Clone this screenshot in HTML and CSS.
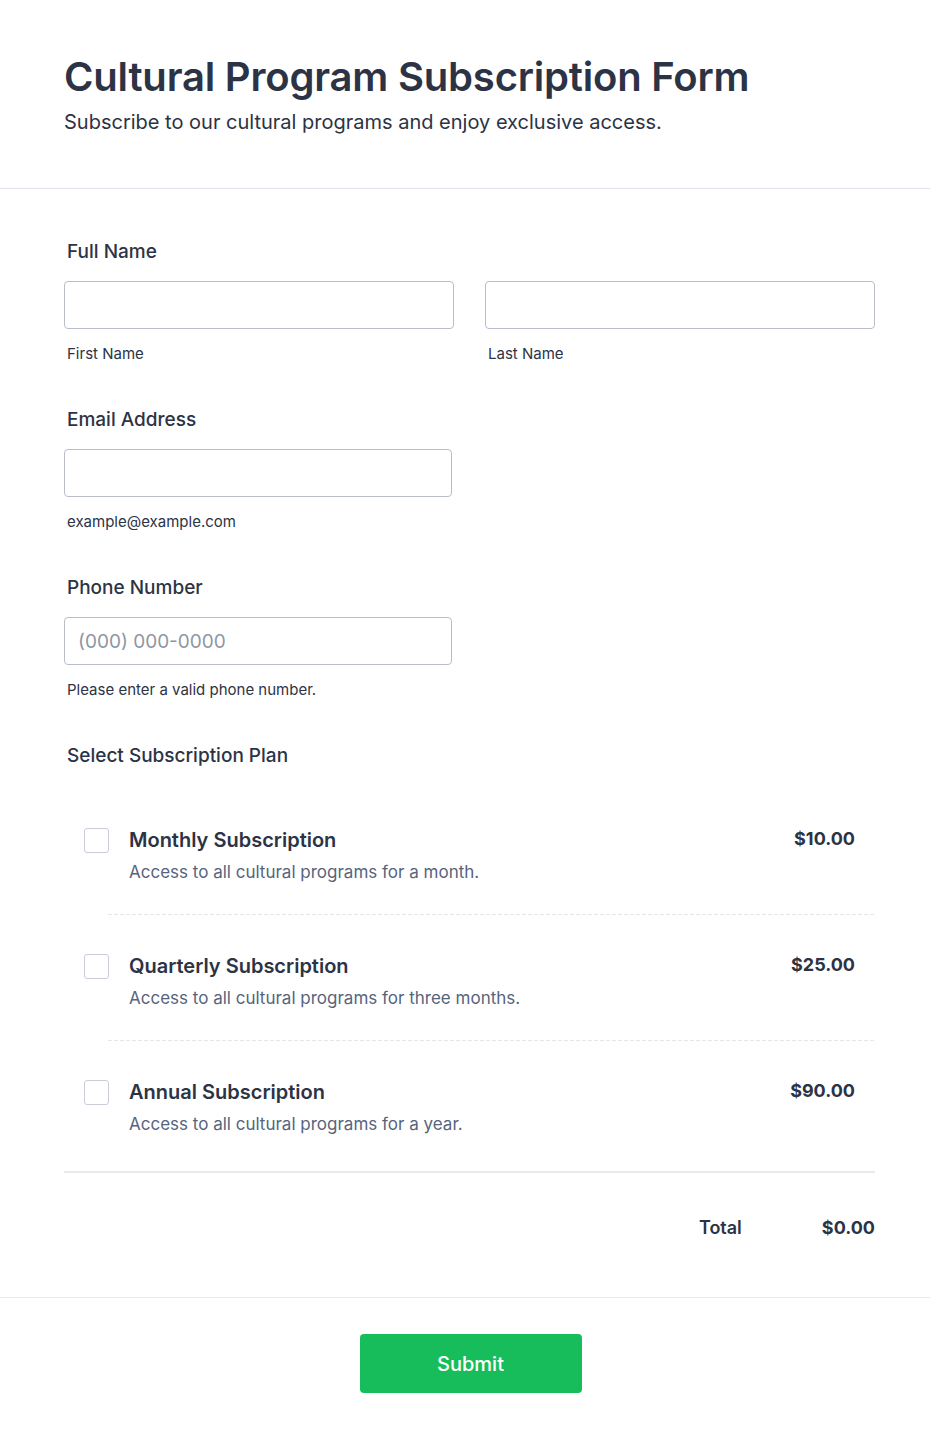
FILE: index.html
```html
<!DOCTYPE html>
<html lang="en">
<head>
<meta charset="utf-8">
<title>Cultural Program Subscription Form</title>
<link rel="stylesheet" href="styles.css">
</head>
<body>
<div class="page">
  <header class="header">
    <h1 class="title">Cultural Program Subscription Form</h1>
    <p class="subtitle">Subscribe to our cultural programs and enjoy exclusive access.</p>
  </header>
  <main class="form">
    <section class="field">
      <div class="label">Full Name</div>
      <div class="name-row">
        <div class="sub">
          <input class="input" type="text">
          <div class="sublabel">First Name</div>
        </div>
        <div class="sub">
          <input class="input" type="text">
          <div class="sublabel">Last Name</div>
        </div>
      </div>
    </section>
    <section class="field">
      <div class="label">Email Address</div>
      <div class="half">
        <input class="input" type="text">
        <div class="sublabel">example@example.com</div>
      </div>
    </section>
    <section class="field">
      <div class="label">Phone Number</div>
      <div class="half">
        <input class="input" type="text" placeholder="(000) 000-0000">
        <div class="sublabel">Please enter a valid phone number.</div>
      </div>
    </section>
    <section class="field plans">
      <div class="label">Select Subscription Plan</div>
      <div class="plan-list">
        <div class="plan">
          <span class="check"></span>
          <div class="plan-body">
            <div class="plan-name">Monthly Subscription</div>
            <div class="plan-desc">Access to all cultural programs for a month.</div>
          </div>
          <div class="plan-price">$10.00</div>
        </div>
        <div class="plan">
          <span class="check"></span>
          <div class="plan-body">
            <div class="plan-name">Quarterly Subscription</div>
            <div class="plan-desc">Access to all cultural programs for three months.</div>
          </div>
          <div class="plan-price">$25.00</div>
        </div>
        <div class="plan last">
          <span class="check"></span>
          <div class="plan-body">
            <div class="plan-name">Annual Subscription</div>
            <div class="plan-desc">Access to all cultural programs for a year.</div>
          </div>
          <div class="plan-price">$90.00</div>
        </div>
      </div>
      <div class="total">
        <span class="total-label">Total</span>
        <span class="total-value">$0.00</span>
      </div>
    </section>
  </main>
  <footer class="footer">
    <button class="submit" type="button">Submit</button>
  </footer>
</div>
</body>
</html>
```
FILE: styles.css
```css
* { box-sizing: border-box; }
html, body { margin: 0; padding: 0; background: #fff; }
body {
  font-family: Inter, "Noto Sans", "Liberation Sans", sans-serif;
  color: #2c3345;
}
.header {
  padding: 52px 55px 54px 64px;
  border-bottom: 1px solid #dfe2e8;
}
.title {
  margin: 0;
  font-size: 40px;
  line-height: 50px;
  font-weight: 600;
  letter-spacing: -0.2px;
  color: #2c3345;
}
.subtitle {
  margin: 8px 0 0;
  font-size: 20px;
  line-height: 24px;
  color: #2c3345;
}
.form {
  padding: 51px 55px 0 64px;
}
.field {
  margin-bottom: 45px;
}
.label {
  padding-left: 3px;
  font-size: 19px;
  line-height: 24px;
  font-weight: 500;
  margin-bottom: 17px;
}
.name-row {
  display: grid;
  grid-template-columns: 1fr 1fr;
  gap: 31px;
}
.half { width: 388px; }
.input {
  display: block;
  width: 100%;
  height: 48px;
  border: 1px solid #b8bdc9;
  border-radius: 4px;
  padding: 0 13px;
  font-family: inherit;
  font-size: 19px;
  color: #2c3345;
  background: #fff;
  outline: none;
}
.input::placeholder { color: #8f96a3; }
.sublabel {
  margin-top: 16px;
  padding-left: 3px;
  font-size: 15px;
  line-height: 18px;
  color: #2c3345;
}
.plans { margin-bottom: 0; }
.plans .label { margin-bottom: 21px; }
.plan-list {
  border-bottom: 2px solid #e8eaf0;
}
.plan {
  display: flex;
  align-items: flex-start;
  padding: 39px 20px 0 20px;
  height: 126px;
  position: relative;
}
.plan::after {
  content: "";
  position: absolute;
  left: 44px;
  right: 0;
  bottom: 0;
  height: 1px;
  background: repeating-linear-gradient(to right, #e4e6ec 0 4px, transparent 4px 6px);
}
.plan.last::after { display: none; }
.plan.last { height: 130px; }
.check {
  flex: none;
  width: 25px;
  height: 25px;
  border: 1px solid #c8cdd8;
  border-radius: 3px;
}
.plan-body {
  flex: 1;
  margin-left: 20px;
}
.plan-name {
  font-size: 20px;
  line-height: 24px;
  font-weight: 600;
  color: #2c3345;
}
.plan-desc {
  margin-top: 9px;
  font-size: 17px;
  line-height: 22px;
  color: #57647e;
}
.plan-price {
  font-size: 18px;
  line-height: 22px;
  font-weight: 700;
  color: #2c3345;
}
.total {
  display: flex;
  justify-content: flex-end;
  align-items: baseline;
  gap: 80px;
  padding: 44px 0 59px;
}
.total-label {
  font-size: 18px;
  font-weight: 600;
}
.total-value {
  font-size: 18px;
  font-weight: 700;
}
.footer {
  border-top: 1px solid #e6e9ef;
  padding: 36px 53px 50px 64px;
  display: flex;
  justify-content: center;
}
.submit {
  width: 222px;
  height: 59px;
  border: none;
  border-radius: 4px;
  background: #18bd5b;
  color: #fff;
  font-family: inherit;
  font-size: 20px;
  font-weight: 500;
  cursor: pointer;
}
```
